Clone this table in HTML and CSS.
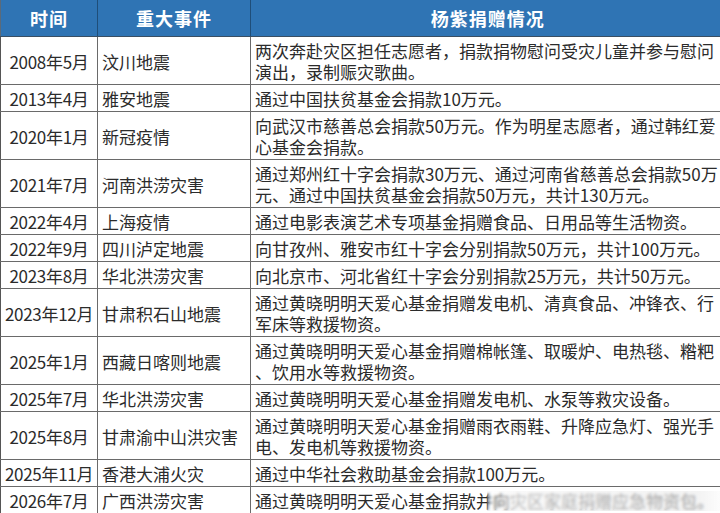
FILE: index.html
```html
<!DOCTYPE html>
<html lang="zh-CN">
<head>
<meta charset="utf-8">
<link rel="stylesheet" href="styles.css">
</head>
<body>
<table class="tbl">
  <colgroup>
    <col class="c-date">
    <col class="c-event">
    <col class="c-info">
  </colgroup>
  <thead>
    <tr><th>时间</th><th>重大事件</th><th>杨紫捐赠情况</th></tr>
  </thead>
  <tbody>
    <tr><td class="date">2008年5月</td><td>汶川地震</td><td class="info">两次奔赴灾区担任志愿者，捐款捐物慰问受灾儿童并参与慰问演出，录制赈灾歌曲。</td></tr>
    <tr><td class="date">2013年4月</td><td>雅安地震</td><td class="info">通过中国扶贫基金会捐款10万元。</td></tr>
    <tr><td class="date">2020年1月</td><td>新冠疫情</td><td class="info">向武汉市慈善总会捐款50万元。作为明星志愿者，通过韩红爱心基金会捐款。</td></tr>
    <tr><td class="date">2021年7月</td><td>河南洪涝灾害</td><td class="info">通过郑州红十字会捐款30万元、通过河南省慈善总会捐款50万元、通过中国扶贫基金会捐款50万元，共计130万元。</td></tr>
    <tr><td class="date">2022年4月</td><td>上海疫情</td><td class="info">通过电影表演艺术专项基金捐赠食品、日用品等生活物资。</td></tr>
    <tr><td class="date">2022年9月</td><td>四川泸定地震</td><td class="info">向甘孜州、雅安市红十字会分别捐款50万元，共计100万元。</td></tr>
    <tr><td class="date">2023年8月</td><td>华北洪涝灾害</td><td class="info">向北京市、河北省红十字会分别捐款25万元，共计50万元。</td></tr>
    <tr><td class="date">2023年12月</td><td>甘肃积石山地震</td><td class="info">通过黄晓明明天爱心基金捐赠发电机、清真食品、冲锋衣、行军床等救援物资。</td></tr>
    <tr><td class="date">2025年1月</td><td>西藏日喀则地震</td><td class="info">通过黄晓明明天爱心基金捐赠棉帐篷、取暖炉、电热毯、糌粑、饮用水等救援物资。</td></tr>
    <tr><td class="date">2025年7月</td><td>华北洪涝灾害</td><td class="info">通过黄晓明明天爱心基金捐赠发电机、水泵等救灾设备。</td></tr>
    <tr><td class="date">2025年8月</td><td>甘肃渝中山洪灾害</td><td class="info">通过黄晓明明天爱心基金捐赠雨衣雨鞋、升降应急灯、强光手电、发电机等救援物资。</td></tr>
    <tr><td class="date">2025年11月</td><td>香港大浦火灾</td><td class="info">通过中华社会救助基金会捐款100万元。</td></tr>
    <tr><td class="date">2026年7月</td><td>广西洪涝灾害</td><td class="info wm-cell">通过黄晓明明天爱心基金捐款并向灾区家庭捐赠应急物资包。<span class="wm" aria-hidden="true"></span></td></tr>
  </tbody>
</table>
</body>
</html>
```
FILE: styles.css
```css
html, body {
  margin: 0;
  padding: 0;
  background: #ffffff;
  overflow: hidden;
}
body {
  width: 720px;
  height: 513px;
  font-family: "Noto Sans CJK SC", "Liberation Sans", sans-serif;
  color: #2b2b2b;
}
.tbl {
  border-collapse: collapse;
  table-layout: fixed;
  width: 724px;
}
.c-date { width: 97px; }
.c-event { width: 153px; }
.c-info { width: 474px; }

.tbl th {
  background: #2f74b4;
  color: #ffffff;
  font-weight: 700;
  font-size: 18px;
  height: 36px;
  padding: 0;
  line-height: 36px;
  text-align: center;
  border-left: 1px solid #1f4e79;
  border-bottom: 1px solid #3a4f63;
  letter-spacing: 1px;
}
.tbl th:first-child { border-left: 1px solid #5a6a7a; }

.tbl td {
  font-size: 17px;
  line-height: 21px;
  padding: 3px 3px 2px 4px;
  border: 1px solid #6a6a6a;
  vertical-align: middle;
  text-align: left;
}
.tbl td:first-child { border-left: 1px solid #555; }
.tbl td.date {
  text-align: center;
  padding-left: 1px;
  padding-right: 1px;
  letter-spacing: -0.3px;
}
.tbl td.info {
  line-break: anywhere;
}
.wm-cell { position: relative; }
.wm {
  position: absolute;
  left: 236px;
  top: 4px;
  width: 240px;
  height: 20px;
  background: linear-gradient(90deg, rgba(255,255,255,0.0), rgba(245,245,245,0.7) 12%, rgba(235,235,235,0.6) 88%, rgba(255,255,255,0.0));
  backdrop-filter: blur(1.5px);
}
```
